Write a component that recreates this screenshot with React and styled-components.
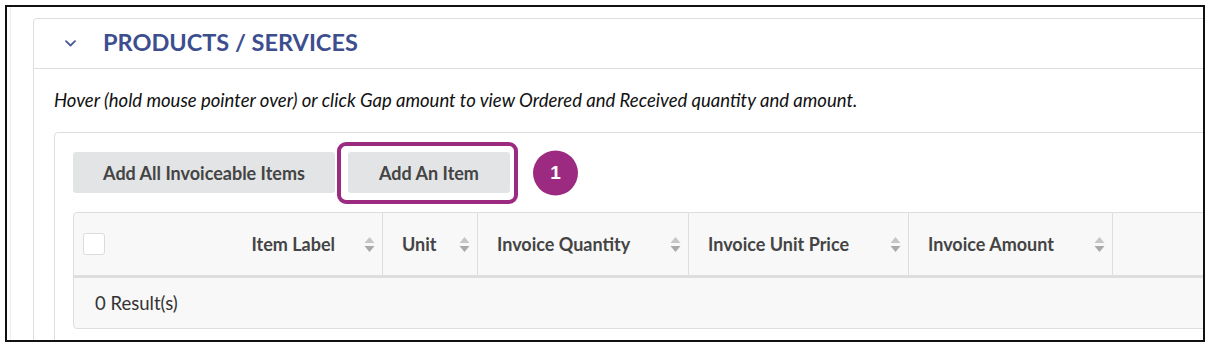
import React from "react";
import styled, { createGlobalStyle } from "styled-components";

const Global = createGlobalStyle`
  html, body { margin: 0; padding: 0; background: #fff; }
  * { box-sizing: border-box; }
  body { font-family: Lato, "Open Sans", sans-serif; }
`;

const Frame = styled.div`
  margin: 5px;
  width: 1200px;
  height: 337px;
  border: 2px solid #111;
  overflow: hidden;
  padding-left: 3px;
  background: #fff;
`;

const Page = styled.div`
  height: 100%;
  border-left: 1px solid #ececec;
  padding: 11px 0 0 22px;
`;

const Panel = styled.section`
  width: calc(100% + 40px);
  border: 1px solid #dedede;
  border-radius: 4px;
  height: 400px;
`;

const PanelHeader = styled.header`
  height: 50px;
  display: flex;
  align-items: center;
  border-bottom: 1px solid #dedede;
  padding-left: 31px;
  gap: 27px;
`;

const Title = styled.h2`
  margin: 0 0 4px 0;
  font-family: Lato, sans-serif;
  font-size: 23.5px;
  font-weight: 700;
  color: #3d4e8f;
`;

const PanelBody = styled.div`
  padding: 20px 0 0 20px;
`;

const Hint = styled.p`
  margin: 0 0 21px 0;
  font-family: Lato, sans-serif;
  font-style: italic;
  font-size: 18.5px;
  line-height: 22px;
  color: #111;
`;

const Card = styled.div`
  border: 1px solid #dedede;
  border-radius: 4px;
  padding: 19px 0 0 18px;
  height: 300px;
`;

const Toolbar = styled.div`
  display: flex;
  align-items: center;
  gap: 13px;
  margin-bottom: 19px;
`;

const Button = styled.button`
  height: 41px;
  width: ${(p) => p.$w}px;
  border: none;
  border-radius: 3px;
  background: #e3e4e5;
  font-family: Lato, sans-serif;
  font-size: 18px;
  font-weight: 700;
  color: #444;
  padding: 0;
  cursor: pointer;
`;

const Highlighted = styled.div`
  position: relative;
  display: flex;
`;

const Ring = styled.div`
  position: absolute;
  left: -11px;
  top: -10px;
  right: -8px;
  bottom: -11px;
  border: 4px solid #9c2a80;
  border-radius: 9px;
  pointer-events: none;
`;

const Badge = styled.div`
  position: absolute;
  left: calc(100% + 23px);
  top: 50%;
  transform: translateY(-50%);
  width: 45px;
  height: 45px;
  border-radius: 50%;
  background: #9c2a80;
  color: #fff;
  display: flex;
  align-items: center;
  justify-content: center;
  font-family: "Liberation Sans", Arial, sans-serif;
  font-weight: 700;
  font-size: 19px;
`;

const Table = styled.div`
  width: calc(100% + 40px);
  border: 1px solid #dedede;
  border-radius: 4px;
  background: #f8f8f8;
`;

const HeadRow = styled.div`
  display: flex;
  height: 65px;
  border-bottom: 3px solid #dedede;
`;

const CheckCell = styled.div`
  width: 50px;
  display: flex;
  align-items: center;
  padding-left: 9px;
`;

const Check = styled.span`
  width: 22px;
  height: 22px;
  border: 1px solid #dcdcdc;
  border-radius: 3px;
  background: #fff;
`;

const HeadCell = styled.div`
  width: ${(p) => p.$w}px;
  flex: ${(p) => (p.$w ? "none" : "1")};
  display: flex;
  align-items: center;
  justify-content: ${(p) => (p.$right ? "flex-end" : "flex-start")};
  gap: ${(p) => p.$gap || 0}px;
  padding: 0 7px 0 ${(p) => (p.$right ? 0 : 19)}px;
  border-right: ${(p) => (p.$last ? "none" : "1px solid #dedede")};
  font-family: Lato, sans-serif;
  font-size: 18px;
  font-weight: 700;
  color: #444;
`;

const Label = styled.span`
  flex: ${(p) => (p.$right ? "none" : "1")};
`;

const BodyRow = styled.div`
  height: 50px;
  display: flex;
  align-items: center;
  padding-left: 21px;
  font-family: Lato, sans-serif;
  font-size: 18.5px;
  color: #333;
`;

const Chevron = () => (
  <svg width="11" height="7" viewBox="0 0 11 7" fill="none">
    <path d="M1 1.2 L5.5 5.5 L10 1.2" stroke="#4b5a97" strokeWidth="1.8" strokeLinecap="round" strokeLinejoin="round" />
  </svg>
);

const Sort = () => (
  <svg width="11" height="17" viewBox="0 0 11 17">
    <path d="M5.5 1 L10.5 7 L0.5 7 Z" fill="#c6c6c6" />
    <path d="M0.5 10 L10.5 10 L5.5 16 Z" fill="#a9a9a9" />
  </svg>
);

const columns = [
  { label: "Unit", w: 95 },
  { label: "Invoice Quantity", w: 211 },
  { label: "Invoice Unit Price", w: 220 },
  { label: "Invoice Amount", w: 204 },
];

export default function App() {
  return (
    <>
      <Global />
      <Frame>
        <Page>
          <Panel>
            <PanelHeader>
              <Chevron />
              <Title>PRODUCTS / SERVICES</Title>
            </PanelHeader>
            <PanelBody>
              <Hint>
                Hover (hold mouse pointer over) or click Gap amount to view Ordered and Received quantity and amount.
              </Hint>
              <Card>
                <Toolbar>
                  <Button $w={262}>Add All Invoiceable Items</Button>
                  <Highlighted>
                    <Button $w={162}>Add An Item</Button>
                    <Ring />
                    <Badge>1</Badge>
                  </Highlighted>
                </Toolbar>
                <Table>
                  <HeadRow>
                    <CheckCell>
                      <Check />
                    </CheckCell>
                    <HeadCell $w={259} $right $gap={29}>
                      <Label $right>Item Label</Label>
                      <Sort />
                    </HeadCell>
                    {columns.map((c) => (
                      <HeadCell key={c.label} $w={c.w}>
                        <Label>{c.label}</Label>
                        <Sort />
                      </HeadCell>
                    ))}
                    <HeadCell $last />
                  </HeadRow>
                  <BodyRow>0 Result(s)</BodyRow>
                </Table>
              </Card>
            </PanelBody>
          </Panel>
        </Page>
      </Frame>
    </>
  );
}
